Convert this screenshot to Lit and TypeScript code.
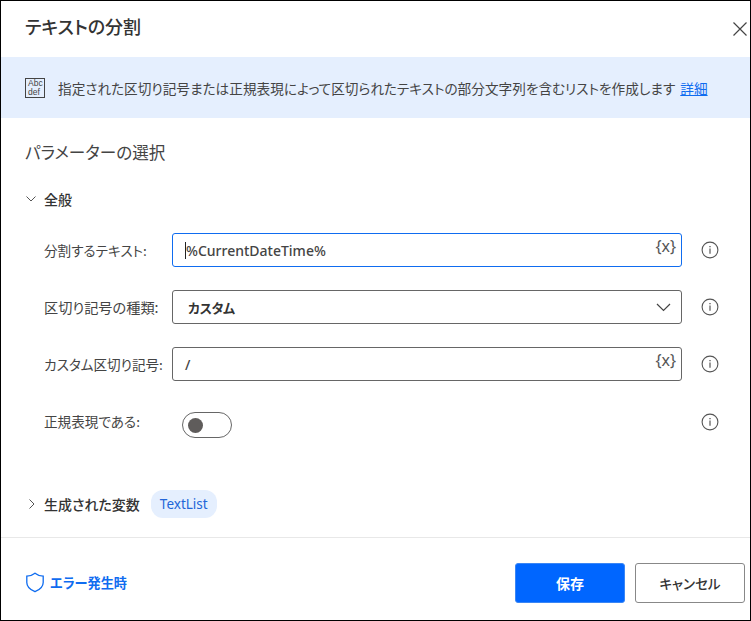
import { LitElement, html, css, svg } from "lit";
import { customElement } from "lit/decorators.js";

const info = html`<svg class="info" width="18" height="18" viewBox="0 0 18 18" fill="none" stroke="#555"><circle cx="9" cy="9" r="7.9" stroke-width="1.1"/><path d="M9 7.6v5.2" stroke-width="1.2"/><path d="M9 4.9v1.3" stroke-width="1.3"/></svg>`;
const braces = html`<span class="braces">{x}</span>`;

@customElement("app-root")
export class AppRoot extends LitElement {
  static styles = css`
    :host { display: block; width: 751px; height: 621px; font-family: "Noto Sans CJK JP", "Noto Sans", sans-serif; color: #333; }
    * { box-sizing: border-box; }
    .frame { width: 751px; height: 621px; border: 1px solid #000; background: #fff; display: flex; flex-direction: column; font-feature-settings: "palt"; }
    .head { height: 56px; display: flex; align-items: center; justify-content: space-between; padding: 0 2px 6px 24px; }
    h1 { margin: 0; font-size: 18px; font-weight: 500; color: #333; line-height: 24px; }
    .close { display: block; margin-top: 5px; }
    .banner { height: 61px; background: #e5effe; display: flex; align-items: center; padding-left: 24px; font-size: 13.65px; color: #444; gap: 13px; }
    .banner a { color: #0f6cf0; text-decoration: underline; margin-left: 5px; }
    .abc { width: 20px; height: 20px; border: 1px solid #444; font-size: 8.5px; line-height: 9px; font-family: "Liberation Sans", sans-serif; padding: 0 0 0 2px; flex: none; color: #444; overflow: hidden; }
    .abc span { display: block; }
    h2 { margin: 0; padding: 21px 0 0 24px; font-size: 16.6px; font-weight: 400; line-height: 26px; color: #444; }
    .group { display: flex; align-items: center; font-size: 14px; font-weight: 500; color: #333; }
    .general { padding: 21px 0 0 25px; height: 46px; }
    .chev { flex: none; margin-right: 8px; }
    .gen .chev { margin-right: 9px; }
    .rows { padding: 22px 0 0 43px; display: flex; flex-direction: column; }
    .row { display: grid; grid-template-columns: 128px 510px 37px; align-items: center; height: 34px; margin-bottom: 23px; font-size: 13.6px; color: #444; }
    .row.wide { font-size: 14.2px; }
    .row.wide .field { font-size: 14px; }
    .row .info { justify-self: end; }
    .toggle-row { margin-top: 8px; height: 26px; }
    .toggle-row .lab { margin-top: -8px; }
    .toggle-row .info { margin-top: -6px; }
    .field { height: 34px; border: 1px solid #666; border-radius: 3px; display: flex; align-items: center; justify-content: space-between; padding: 0 5px 0 12px; font-size: 14px; color: #444; background: #fff; }
    .field.focus { border-color: #0f6cf0; }
    .field .val { font-weight: 500; font-family: "Noto Sans", sans-serif; }
    .caret { display: inline-block; width: 1px; height: 17px; background: #222; vertical-align: -3px; }
    .braces { font-size: 16px; color: #555; font-family: "Noto Sans", sans-serif; margin-top: -8px; }
    .select { padding: 0 10px 0 15px; font-weight: 700; color: #333; }
    .select span { font-size: 13px; letter-spacing: -0.3px; }
    .toggle { width: 50px; height: 26px; margin-left: 10px; border: 1px solid #666; border-radius: 13px; display: flex; align-items: center; padding-left: 5px; }
    .toggle i { width: 15px; height: 15px; border-radius: 50%; background: #5f5c5b; display: block; }
    .gen { padding: 10px 0 0 28px; height: 76px; align-items: center; }
    .chip { margin-left: 11px; height: 28px; padding: 0 9px; border-radius: 12px; background: #e5effe; color: #2266d8; font-weight: 400; font-family: "Noto Sans", sans-serif; font-size: 13.5px; display: flex; align-items: center; }
    .foot { flex: 1; border-top: 1px solid #e8e8e8; display: flex; align-items: center; justify-content: space-between; padding: 7px 5px 0 24px; }
    .err { display: flex; align-items: center; gap: 5px; color: #0f6cf0; font-size: 13.2px; font-weight: 700; }
    .btns { display: flex; gap: 10px; }
    .btn { width: 110px; height: 40px; border-radius: 3px; font-size: 13.5px; font-weight: 500; display: flex; align-items: center; justify-content: center; }
    .save { background: #0066ff; color: #fff; border: 1px solid #3a86f5; font-weight: 700; font-size: 14px; }
    .cancel { background: #fff; color: #333; border: 1px solid #888; }
  `;

  render() {
    const down = svg`<path d="M1 1l6.5 6.500L14 1" fill="none" stroke="#444" stroke-width="1.2"/>`;
    return html`<div class="frame">
      <div class="head">
        <h1>テキストの分割</h1>
        <svg class="close" width="16" height="16" viewBox="0 0 16 16"><path d="M1.500 1.500l13 13M14.500 1.500l-13 13" stroke="#444" stroke-width="1.2" fill="none"/></svg>
      </div>
      <div class="banner">
        <div class="abc"><span>Abc</span><span>def</span></div>
        <div>指定された区切り記号または正規表現によって区切られたテキストの部分文字列を含むリストを作成します<a>詳細</a></div>
      </div>
      <h2>パラメーターの選択</h2>
      <div class="group general">
        <svg class="chev" width="10" height="6" viewBox="0 0 10 6"><path d="M.5.5L5 5 9.500.5" fill="none" stroke="#555" stroke-width="1"/></svg>
        全般
      </div>
      <div class="rows">
        <div class="row"><span>分割するテキスト:</span><div class="field focus"><span class="val"><span class="caret"></span>%CurrentDateTime%</span>${braces}</div>${info}</div>
        <div class="row wide"><span>区切り記号の種類:</span><div class="field select"><span>カスタム</span><svg width="15" height="9" viewBox="0 0 15 9">${down}</svg></div>${info}</div>
        <div class="row"><span>カスタム区切り記号:</span><div class="field"><span class="val">/</span>${braces}</div>${info}</div>
        <div class="row toggle-row"><span class="lab">正規表現である:</span><div class="toggle"><i></i></div>${info}</div>
      </div>
      <div class="group gen">
        <svg class="chev" width="6" height="10" viewBox="0 0 6 10"><path d="M.5.5L5 5 .5 9.500" fill="none" stroke="#555" stroke-width="1"/></svg>
        生成された変数
        <span class="chip">TextList</span>
      </div>
      <div class="foot">
        <div class="err">
          <svg width="20" height="21" viewBox="0 0 20 21"><path d="M10 1.200c2.400 1.900 5 2.800 8.200 3v6.300c0 4-3.200 7.200-8.200 9.200-5-2-8.200-5.200-8.200-9.200V4.200c3.200-.2 5.800-1.100 8.200-3z" fill="none" stroke="#0f6cf0" stroke-width="1.300"/></svg>
          エラー発生時
        </div>
        <div class="btns"><div class="btn save">保存</div><div class="btn cancel">キャンセル</div></div>
      </div>
    </div>`;
  }
}
